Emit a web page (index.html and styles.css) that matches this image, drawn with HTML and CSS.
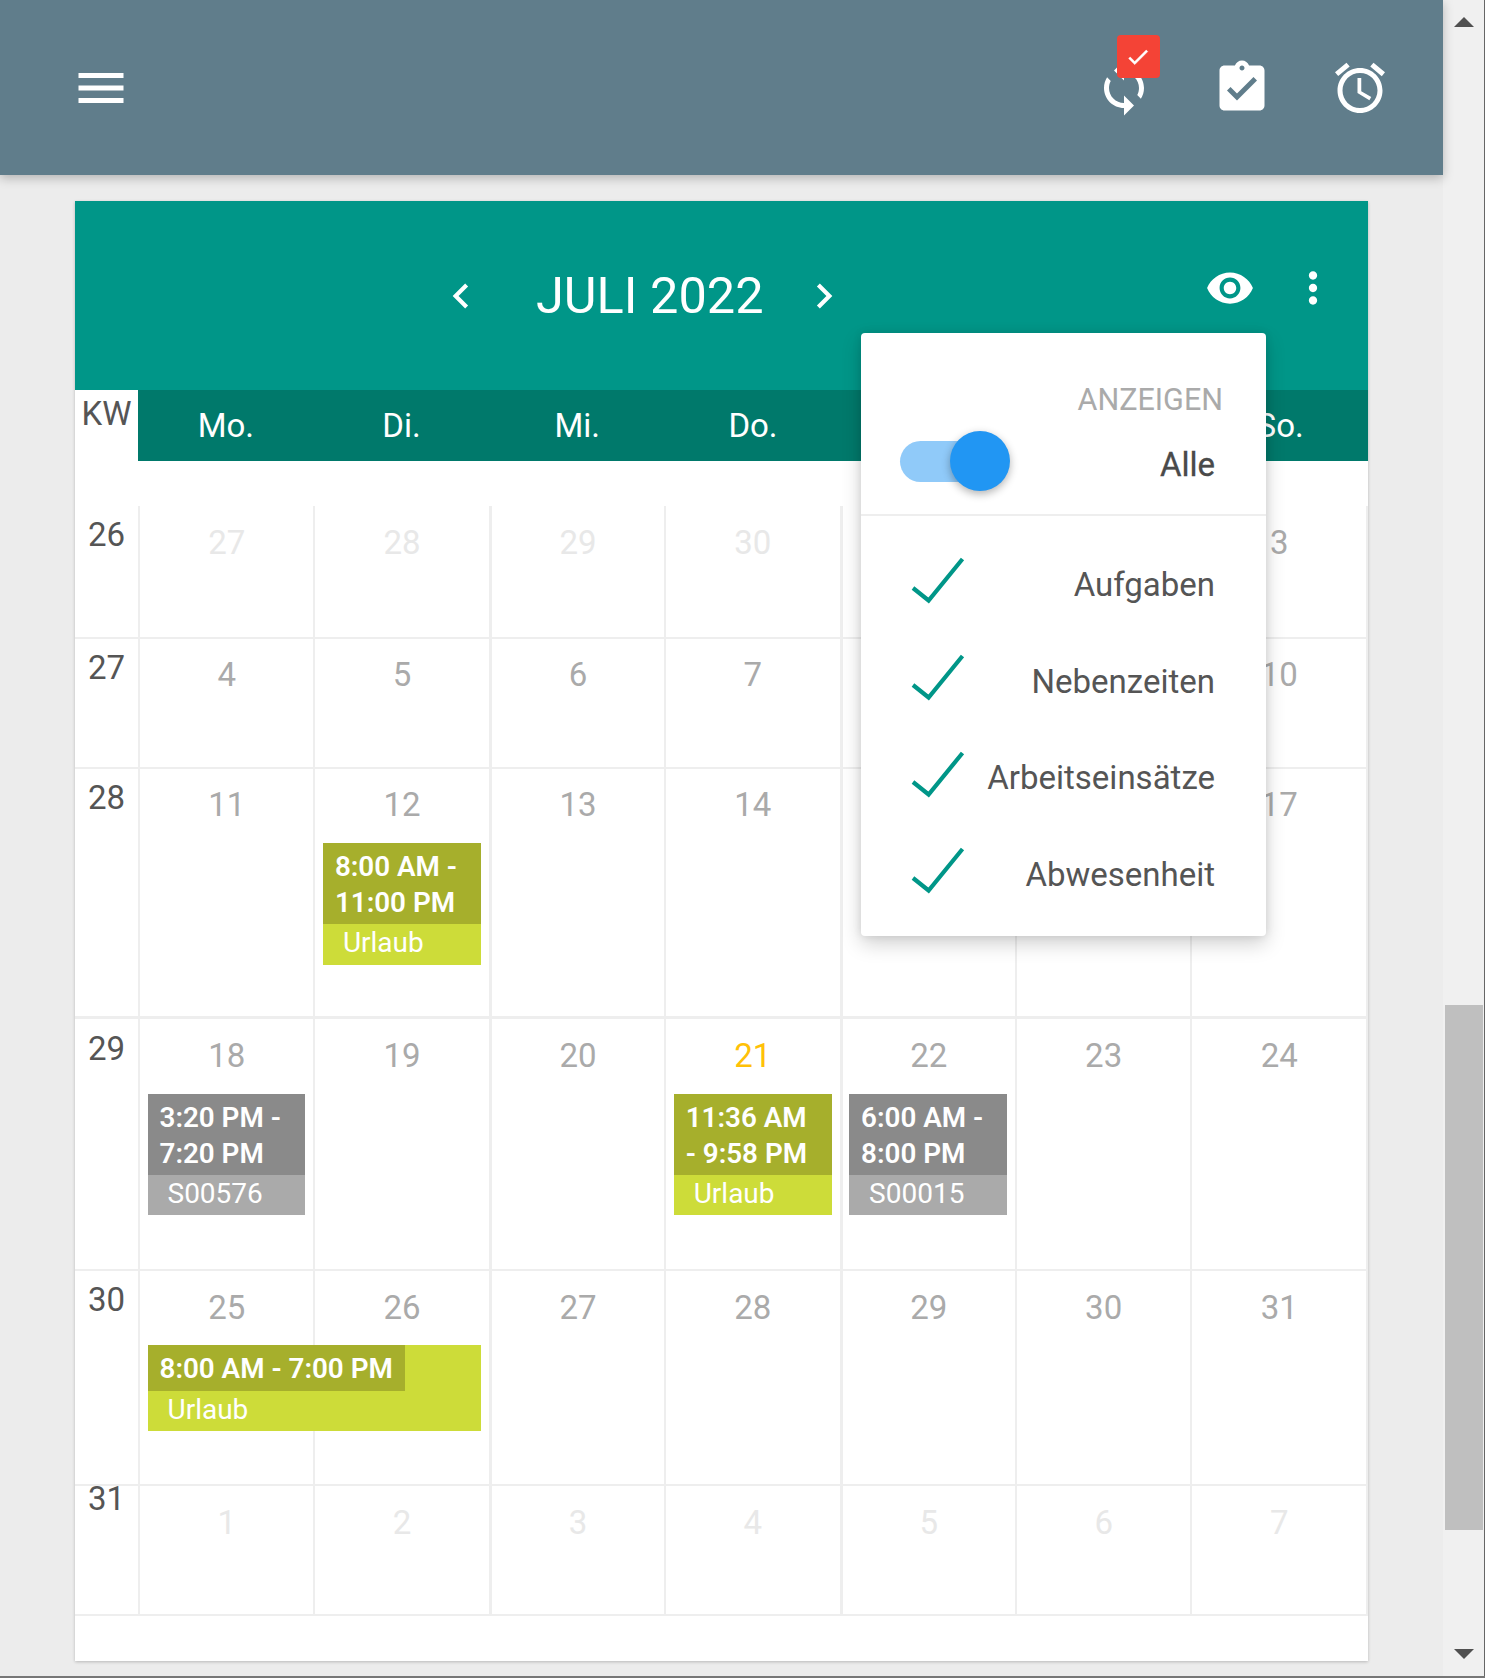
FILE: index.html
```html
<!DOCTYPE html>
<html lang="de">
<head>
<meta charset="utf-8">
<title>Kalender</title>
<link rel="stylesheet" href="styles.css">
</head>
<body>
<div class="page">
  <main class="main">
    <header class="topbar">
      <svg class="icon60 menu" viewBox="0 0 24 24"><path d="M3 18h18v-2H3v2zm0-5h18v-2H3v2zm0-7v2h18V6H3z"/></svg>
      <div class="sync">
        <svg class="icon60" viewBox="0 0 24 24"><path d="M12 4V1L8 5l4 4V6c3.31 0 6 2.69 6 6 0 1.01-.25 1.97-.7 2.8l1.46 1.46C19.54 15.03 20 13.57 20 12c0-4.42-3.58-8-8-8zm0 14c-3.31 0-6-2.69-6-6 0-1.01.25-1.97.7-2.8L5.24 7.74C4.46 8.97 4 10.43 4 12c0 4.42 3.58 8 8 8v3l4-4-4-4v3z"/></svg>
        <span class="badge"><svg viewBox="0 0 24 24"><path d="M9 16.2L4.8 12l-1.4 1.4L9 19 21 7l-1.4-1.4L9 16.2z"/></svg></span>
      </div>
      <svg class="icon60" viewBox="0 0 24 24"><path d="M19 3h-4.18C14.4 1.84 13.3 1 12 1c-1.3 0-2.4.84-2.82 2H5c-1.1 0-2 .9-2 2v14c0 1.1.9 2 2 2h14c1.1 0 2-.9 2-2V5c0-1.1-.9-2-2-2zm-7 0c.55 0 1 .45 1 1s-.45 1-1 1-1-.45-1-1 .45-1 1-1zm-2 14l-4-4 1.41-1.41L10 14.17l6.59-6.59L18 9l-8 8z"/></svg>
      <svg class="icon60" viewBox="0 0 24 24"><path d="M22 5.72l-4.6-3.86-1.29 1.53 4.6 3.86L22 5.72zM7.88 3.39L6.6 1.86 2 5.71l1.29 1.53 4.59-3.85zM12.5 8H11v6l4.75 2.85.75-1.23-4-2.37V8zM12 4c-4.97 0-9 4.03-9 9s4.03 9 9 9 9-4.03 9-9-4.03-9-9-9zm0 16c-3.87 0-7-3.13-7-7s3.13-7 7-7 7 3.13 7 7-3.13 7-7 7z"/></svg>
    </header>

    <section class="card">
      <div class="cal-head">
        <svg class="icon50" viewBox="0 0 24 24"><path d="M15.41 7.41L14 6l-6 6 6 6 1.41-1.41L10.83 12z"/></svg>
        <h1 class="month">JULI 2022</h1>
        <svg class="icon50" viewBox="0 0 24 24"><path d="M8.59 16.59L10 18l6-6-6-6-1.41 1.41L13.17 12z"/></svg>
        <div class="cal-actions">
          <svg class="icon50" viewBox="0 0 24 24"><path d="M12 4.5C7 4.5 2.73 7.61 1 12c1.73 4.39 6 7.5 11 7.5s9.27-3.11 11-7.5c-1.73-4.39-6-7.5-11-7.5zM12 17c-2.76 0-5-2.24-5-5s2.24-5 5-5 5 2.24 5 5-2.24 5-5 5zm0-8c-1.66 0-3 1.34-3 3s1.34 3 3 3 3-1.34 3-3-1.34-3-3-3z"/></svg>
          <svg class="icon50" viewBox="0 0 24 24"><path d="M12 8c1.1 0 2-.9 2-2s-.9-2-2-2-2 .9-2 2 .9 2 2 2zm0 2c-1.1 0-2 .9-2 2s.9 2 2 2 2-.9 2-2-.9-2-2-2zm0 6c-1.1 0-2 .9-2 2s.9 2 2 2 2-.9 2-2-.9-2-2-2z"/></svg>
        </div>
      </div>

      <div class="weekdays">
        <div class="kw-head">KW</div>
        <div class="weekday">Mo.</div>
        <div class="weekday">Di.</div>
        <div class="weekday">Mi.</div>
        <div class="weekday">Do.</div>
        <div class="weekday">Fr.</div>
        <div class="weekday">Sa.</div>
        <div class="weekday">So.</div>
      </div>

      <div class="weeks">
        <div class="week h133">
          <div class="kw">26</div>
          <div class="day c1 other">27</div><div class="day c2 other">28</div><div class="day c3 other">29</div><div class="day c4 other">30</div><div class="day c5">1</div><div class="day c6">2</div><div class="day c7">3</div>
        </div>
        <div class="week h130 tight">
          <div class="kw">27</div>
          <div class="day c1">4</div><div class="day c2">5</div><div class="day c3">6</div><div class="day c4">7</div><div class="day c5">8</div><div class="day c6">9</div><div class="day c7">10</div>
        </div>
        <div class="week h250 tight">
          <div class="kw">28</div>
          <div class="day c1">11</div><div class="day c2">12</div><div class="day c3">13</div><div class="day c4">14</div><div class="day c5">15</div><div class="day c6">16</div><div class="day c7">17</div>
          <div class="event c2 green"><div class="event-time">8:00 AM - 11:00 PM</div><div class="event-name">Urlaub</div></div>
        </div>
        <div class="week h252">
          <div class="kw kw-low">29</div>
          <div class="day c1">18</div><div class="day c2">19</div><div class="day c3">20</div><div class="day c4 today">21</div><div class="day c5">22</div><div class="day c6">23</div><div class="day c7">24</div>
          <div class="event c1 grey"><div class="event-time">3:20 PM - 7:20 PM</div><div class="event-name">S00576</div></div>
          <div class="event c4 green"><div class="event-time">11:36 AM - 9:58 PM</div><div class="event-name">Urlaub</div></div>
          <div class="event c5 grey"><div class="event-time">6:00 AM - 8:00 PM</div><div class="event-name">S00015</div></div>
        </div>
        <div class="week h215">
          <div class="kw">30</div>
          <div class="day c1">25</div><div class="day c2">26</div><div class="day c3">27</div><div class="day c4">28</div><div class="day c5">29</div><div class="day c6">30</div><div class="day c7">31</div>
          <div class="event span2 green"><div class="event-time fit">8:00 AM - 7:00 PM</div><div class="event-name">Urlaub</div></div>
        </div>
        <div class="week h130">
          <div class="kw kw-high">31</div>
          <div class="day c1 other">1</div><div class="day c2 other">2</div><div class="day c3 other">3</div><div class="day c4 other">4</div><div class="day c5 other">5</div><div class="day c6 other">6</div><div class="day c7 other">7</div>
        </div>
      </div>

      <div class="popup">
        <div class="popup-top">
          <div class="popup-label">ANZEIGEN</div>
          <div class="popup-toggle-row">
            <div class="toggle"><span class="toggle-thumb"></span></div>
            <span class="popup-all">Alle</span>
          </div>
        </div>
        <ul class="popup-list">
          <li class="popup-item"><svg class="check" viewBox="0 0 56 48"><polyline points="3,32 18.6,44.5 52.5,3"/></svg><span>Aufgaben</span></li>
          <li class="popup-item"><svg class="check" viewBox="0 0 56 48"><polyline points="3,32 18.6,44.5 52.5,3"/></svg><span>Nebenzeiten</span></li>
          <li class="popup-item"><svg class="check" viewBox="0 0 56 48"><polyline points="3,32 18.6,44.5 52.5,3"/></svg><span>Arbeitseinsätze</span></li>
          <li class="popup-item"><svg class="check" viewBox="0 0 56 48"><polyline points="3,32 18.6,44.5 52.5,3"/></svg><span>Abwesenheit</span></li>
        </ul>
      </div>
    </section>
  </main>

  <aside class="scrollbar">
    <span class="arrow-up"></span>
    <div class="thumb"></div>
    <span class="arrow-down"></span>
  </aside>
</div>
</body>
</html>
```
FILE: styles.css
```css
* { box-sizing: border-box; }
html, body { margin: 0; padding: 0; height: 100%; overflow: hidden; }
body { font-family: Roboto, "Liberation Sans", sans-serif; color: #555; background: #ececec; }

.page {
  display: flex;
  width: 1485px;
  height: 1678px;
  border-bottom: 2px solid #777;
}
.main { width: 1443px; flex: none; }

/* top bar */
.topbar {
  position: relative;
  z-index: 2;
  height: 175px;
  background: #607d8b;
  box-shadow: 0 3px 10px rgba(0, 0, 0, .25);
  display: flex;
  align-items: center;
  gap: 58px;
  padding: 0 53px 0 70.5px;
}
.icon60 { width: 60px; height: 60px; fill: #fff; flex: none; display: block; }
.menu { margin-right: auto; }
.sync { position: relative; width: 60px; height: 60px; flex: none; }
.badge {
  position: absolute;
  left: 22.5px;
  top: -22.5px;
  width: 43px;
  height: 43px;
  border-radius: 4px;
  background: #f44336;
  display: flex;
  align-items: center;
  justify-content: center;
}
.badge svg { width: 26px; height: 26px; fill: #fff; stroke: #fff; stroke-width: .5; }

/* card */
.card {
  position: relative;
  margin: 26px 0 0 75px;
  width: 1293px;
  height: 1460px;
  background: #fff;
  box-shadow: 0 1px 3px rgba(0, 0, 0, .22);
}
.cal-head {
  height: 189px;
  background: #009688;
  display: flex;
  align-items: center;
  padding: 0 30px 0 361px;
}
.icon50 { width: 50px; height: 50px; fill: #fff; flex: none; display: block; }
.month {
  margin: 1px 37px 0 50px;
  width: 226px;
  font-size: 50.5px;
  font-weight: 400;
  line-height: 56px;
  color: #fff;
  white-space: nowrap;
}
.cal-actions {
  margin-left: auto;
  margin-bottom: 16px;
  display: flex;
  gap: 33px;
}

.weekdays {
  display: grid;
  grid-template-columns: 63px repeat(7, 1fr);
  height: 71px;
  background: #00796b;
}
.kw-head {
  background: #fff;
  font-size: 33px;
  line-height: 47px;
  padding-left: 6.5px;
  color: #555;
}
.weekday {
  color: #fff;
  font-size: 33px;
  line-height: 72px;
  text-align: center;
}

.weeks { margin-top: 45px; }
.week {
  display: grid;
  grid-template-columns: 63px repeat(6, 175.4px) 1fr;
  grid-template-rows: 1fr;
  border-bottom: 2px solid #eee;
}
.h130 { height: 130px; }
.h133 { height: 133px; }
.h215 { height: 215px; }
.h250 { height: 250px; border-bottom-width: 3px; }
.h252 { height: 252px; }

.kw {
  grid-column: 1;
  grid-row: 1;
  font-size: 33px;
  line-height: 40px;
  padding: 9px 0 0 13px;
  color: #555;
}
.kw-low { padding-top: 10px; }
.kw-high { padding-top: 0; margin-top: -7px; }
.day {
  grid-row: 1;
  border-left: 2px solid #eee;
  font-size: 33px;
  line-height: 40px;
  padding-top: 17px;
  text-align: center;
  color: #aaa;
}
.tight .day { padding-top: 16px; }
.c3.day, .c5.day { border-left-width: 3px; }
.c7.day { border-right: 2px solid #eee; }
.other { color: #e8e8e8; }
.today { color: #ffc107; }
.c1 { grid-column: 2; }
.c2 { grid-column: 3; }
.c3 { grid-column: 4; }
.c4 { grid-column: 5; }
.c5 { grid-column: 6; }
.c6 { grid-column: 7; }
.c7 { grid-column: 8; }
.span2 { grid-column: 2 / 4; }

.event {
  grid-row: 1;
  align-self: start;
  margin: 73.5px 8px 0 9.5px;
  color: #fff;
  font-size: 28px;
}
.h252 .event { margin-top: 74.5px; }
.event-time {
  font-size: 27.8px;
  font-weight: 600;
  line-height: 36px;
  padding: 6px 12px 3px;
}
.event-name {
  line-height: 38px;
  height: 40.5px;
  padding-left: 20px;
}
.h250 .event-name { height: 41px; }
.fit { width: fit-content; padding-bottom: 4px; }
.green { background: #cddc39; }
.green .event-time { background: #a6af2c; }
.grey { background: #aaa; }
.grey .event-time { background: #8a8a8a; }

/* popup menu */
.popup {
  position: absolute;
  left: 786px;
  top: 132px;
  width: 405px;
  height: 603px;
  background: #fff;
  border-radius: 4px;
  box-shadow: 0 8px 20px rgba(0, 0, 0, .18), 0 0 8px rgba(0, 0, 0, .1);
}
.popup-top {
  height: 183px;
  padding-top: 47px;
  border-bottom: 2px solid #eee;
}
.popup-label {
  font-size: 30.5px;
  line-height: 40px;
  text-align: right;
  color: #aaa;
  padding-right: 43px;
}
.popup-toggle-row {
  height: 60px;
  margin-top: 11px;
  padding: 0 51px 0 39px;
  display: flex;
  align-items: center;
  justify-content: space-between;
}
.toggle {
  position: relative;
  width: 90px;
  height: 41px;
  border-radius: 21px;
  background: #90caf9;
}
.toggle-thumb {
  position: absolute;
  right: -20px;
  top: -10px;
  width: 60px;
  height: 60px;
  border-radius: 50%;
  background: #2196f3;
  box-shadow: 0 3px 8px rgba(0, 0, 0, .3);
}
.popup-all {
  font-size: 33px;
  line-height: 40px;
  margin-top: 7px;
  color: #4a4a4a;
  -webkit-text-stroke: .3px #4a4a4a;
}
.popup-list {
  list-style: none;
  margin: 0;
  padding: 20px 51px 0 49px;
}
.popup-item {
  height: 96.7px;
  display: flex;
  align-items: center;
  justify-content: space-between;
  font-size: 33px;
  color: #555;
}
.check {
  width: 56px;
  height: 48px;
  margin-bottom: 8px;
  fill: none;
  stroke: #009688;
  stroke-width: 4.2;
}

/* browser scrollbar */
.scrollbar {
  position: relative;
  width: 42px;
  flex: none;
  background: #f0f0f0;
  border-right: 1px solid #666;
}
.arrow-up, .arrow-down {
  position: absolute;
  left: 11px;
  width: 0;
  height: 0;
  border-left: 10px solid transparent;
  border-right: 10px solid transparent;
}
.arrow-up { top: 17px; border-bottom: 10px solid #505050; }
.arrow-down { top: 1649px; border-top: 10px solid #505050; }
.thumb {
  position: absolute;
  left: 2px;
  right: 1px;
  top: 1005px;
  height: 525px;
  background: #bfbfbf;
}
```
